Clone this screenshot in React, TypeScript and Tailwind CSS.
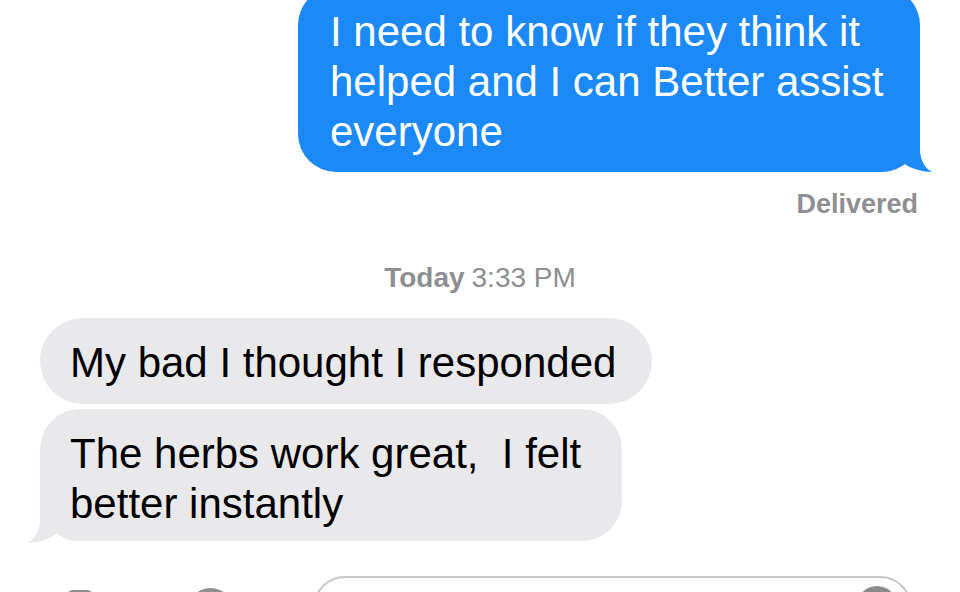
import React from "react";

const font = { fontFamily: '"Liberation Sans", Arial, sans-serif' };

function BlueTail() {
  return (
    <svg
      className="absolute right-[-12px]"
      width="52"
      height="42"
      viewBox="0 0 52 42"
      style={{ bottom: -1 }}
    >
      <path
        d="M0 41 L0 0 L40 0 L40 18 C40 30 45 37 52 41 C44 41 31 38 23 32 C18 37 10 41 0 41 Z"
        fill="#1b89f8"
      />
    </svg>
  );
}

function GreyTail() {
  return (
    <svg
      className="absolute left-[-12px]"
      width="52"
      height="42"
      viewBox="0 0 52 42"
      style={{ bottom: -2 }}
    >
      <path
        d="M52 40 L52 0 L12 0 L12 18 C12 30 7 37 0 42 C8 42 21 39 29 32 C34 37 42 40 52 40 Z"
        fill="#e9e9eb"
      />
    </svg>
  );
}

export default function App() {
  return (
    <div
      className="w-full h-[592px] overflow-hidden bg-white flex flex-col"
      style={font}
    >
      {/* outgoing message */}
      <div className="flex justify-end pr-[40px] mt-[-13px]">
        <div className="relative w-[622px] bg-[#1b89f8] rounded-[38px] pl-[32px] pt-[20px] pb-[15px] text-white text-[42px] leading-[50px]">
          <BlueTail />
          <div className="relative">I need to know if they think it</div>
          <div className="relative">helped and I can Better assist</div>
          <div className="relative">everyone</div>
        </div>
      </div>

      <div className="flex justify-end pr-[42px] mt-[16px] text-[27px] leading-[32px] font-semibold text-[#8e8e93]">
        Delivered
      </div>

      <div className="flex justify-center mt-[42px] text-[28px] leading-[32px] text-[#8e8e93]">
        <span className="font-semibold">Today</span>
        <span className="ml-[7px]">3:33 PM</span>
      </div>

      {/* incoming messages */}
      <div className="flex flex-col items-start pl-[40px] mt-[24px] text-black text-[42px] leading-[50px]">
        <div className="w-[612px] bg-[#e9e9eb] rounded-[43px] pl-[30px] pt-[20px] pb-[16px]">
          My bad I thought I responded
        </div>
        <div className="relative w-[582px] mt-[5px] bg-[#e9e9eb] rounded-[40px] pl-[30px] pt-[20px] pb-[12px]">
          <GreyTail />
          <div className="relative whitespace-pre">The herbs work great,  I felt</div>
          <div className="relative">better instantly</div>
        </div>
      </div>

      {/* input bar */}
      <div className="flex items-start pl-[67px] mt-[35px]">
        <div className="mt-[14px] w-[26px]">
          <svg width="26" height="20" viewBox="0 0 26 20">
            <rect x="0" y="0" width="26" height="20" rx="6" fill="#8e8e93" />
          </svg>
        </div>
        <div className="mt-[12px] ml-[95px] w-[45px] h-[45px] rounded-full bg-[#8e8e93]" />
        <div className="ml-[80px] w-[599px] h-[64px] rounded-[36px] border-2 border-[#c8c8cc] flex justify-end pr-[13px] pt-[8px]">
          <div className="w-[40px] h-[40px] rounded-full bg-[#8a8a8e]" />
        </div>
      </div>
    </div>
  );
}
